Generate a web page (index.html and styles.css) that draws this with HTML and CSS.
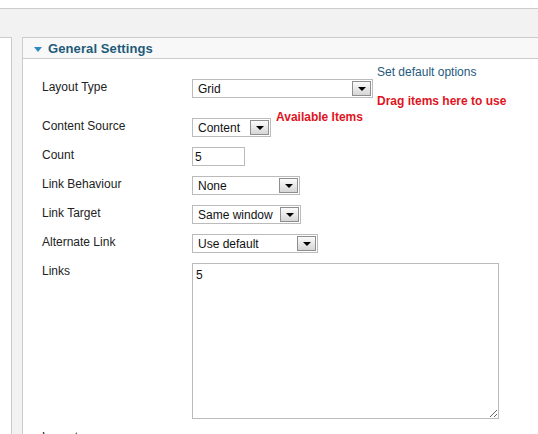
FILE: index.html
```html
<!DOCTYPE html>
<html>
<head>
<meta charset="utf-8">
<link rel="stylesheet" href="styles.css">
</head>
<body>
<div class="topgap"></div>
<div class="main">
  <div class="sidebar"></div>
  <div class="panel">
    <div class="panel-head">
      <span class="caret"></span>
      <span class="panel-title">General Settings</span>
    </div>
    <div class="panel-body">
      <div class="row row-layout">
        <div class="label l-first">Layout Type</div>
        <div class="select s-layout s-first"><span class="val">Grid</span><span class="btn"><i class="tri"></i></span></div>
        <div class="side">
          <div class="link">Set default options</div>
          <div class="red drag">Drag items here to use</div>
        </div>
      </div>
      <div class="row">
        <div class="label">Content Source</div>
        <div class="select s-content"><span class="val">Content</span><span class="btn"><i class="tri"></i></span></div>
        <div class="red avail">Available Items</div>
      </div>
      <div class="row">
        <div class="label">Count</div>
        <div class="input">5</div>
      </div>
      <div class="row">
        <div class="label">Link Behaviour</div>
        <div class="select s-behav"><span class="val">None</span><span class="btn"><i class="tri"></i></span></div>
      </div>
      <div class="row">
        <div class="label">Link Target</div>
        <div class="select s-target"><span class="val">Same window</span><span class="btn"><i class="tri"></i></span></div>
      </div>
      <div class="row">
        <div class="label">Alternate Link</div>
        <div class="select s-alt"><span class="val">Use default</span><span class="btn"><i class="tri"></i></span></div>
      </div>
      <div class="row">
        <div class="label">Links</div>
        <textarea class="area">5</textarea>
      </div>
      <div class="row">
        <div class="label">Layout</div>
      </div>
    </div>
  </div>
</div>
</body>
</html>
```

FILE: styles.css
```css
html, body {
  margin: 0;
  padding: 0;
  height: 100%;
  overflow: hidden;
  background: #ffffff;
}
body {
  font-family: "Liberation Sans", Arial, sans-serif;
  font-size: 12px;
  color: #222222;
}
.topgap {
  height: 8px;
  background: #ffffff;
}
.main {
  border-top: 1px solid #cccccc;
  background: #f2f2f2;
  padding-top: 28px;
  display: flex;
  height: 500px;
}
.sidebar {
  width: 11px;
  background: #ffffff;
  border-top: 1px solid #cccccc;
  border-right: 1px solid #cccccc;
  margin-right: 10px;
}
.panel {
  flex: 1;
  background: #ffffff;
  border-top: 1px solid #cccccc;
  border-left: 1px solid #cccccc;
}
.panel-head {
  height: 20px;
  background: #f8f8f8;
  border-bottom: 1px solid #cccccc;
  display: flex;
  align-items: center;
  padding-left: 11px;
}
.caret {
  width: 0;
  height: 0;
  border-left: 4px solid transparent;
  border-right: 4px solid transparent;
  border-top: 5px solid #2f8ac4;
  margin-right: 6px;
  margin-top: 2px;
}
.panel-title {
  font-weight: bold;
  font-size: 13px;
  color: #1e5b7a;
  letter-spacing: 0.1px;
}
.panel-body {
  padding: 6px 0 0 19px;
}
.row {
  display: flex;
  align-items: flex-start;
  margin-bottom: 10px;
  line-height: 14px;
}
.label {
  width: 150px;
  flex: none;
  margin-top: 1px;
  color: #222222;
}
.l-first {
  margin-top: 15px;
}
.select {
  box-sizing: border-box;
  height: 19px;
  border: 1px solid #bbbbbb;
  background: #ffffff;
  display: flex;
  align-items: center;
  justify-content: space-between;
  flex: none;
}
.s-first {
  margin-top: 14px;
}
.val {
  padding-left: 5px;
  padding-top: 1px;
  line-height: 16px;
  white-space: nowrap;
  color: #111111;
}
.btn {
  box-sizing: border-box;
  width: 19px;
  height: 15px;
  margin-right: 1px;
  border: 1px solid #8e8e8e;
  background: linear-gradient(#fbfbfb, #d6d6d6);
  display: flex;
  align-items: center;
  justify-content: center;
  flex: none;
}
.tri {
  width: 0;
  height: 0;
  border-left: 4px solid transparent;
  border-right: 4px solid transparent;
  border-top: 4px solid #000000;
  margin-top: 1px;
}
.s-layout { width: 181px; }
.s-content { width: 79px; }
.s-behav { width: 108px; }
.s-target { width: 109px; }
.s-alt { width: 126px; }
.side {
  margin-left: 4px;
  display: flex;
  flex-direction: column;
}
.link {
  color: #25597c;
}
.red {
  color: #e0141e;
  font-weight: bold;
}
.drag {
  margin-top: 15px;
}
.avail {
  margin-left: 5px;
  margin-top: -8px;
}
.input {
  box-sizing: border-box;
  width: 53px;
  height: 19px;
  border: 1px solid #bbbbbb;
  padding-left: 2px;
  padding-top: 1px;
  line-height: 16px;
  color: #111111;
}
.area {
  box-sizing: border-box;
  width: 307px;
  height: 156px;
  margin: 0;
  border: 1px solid #bbbbbb;
  padding: 4px 3px;
  font-family: "Liberation Sans", Arial, sans-serif;
  font-size: 12px;
  color: #111111;
  background: #ffffff;
  outline: none;
}
```
